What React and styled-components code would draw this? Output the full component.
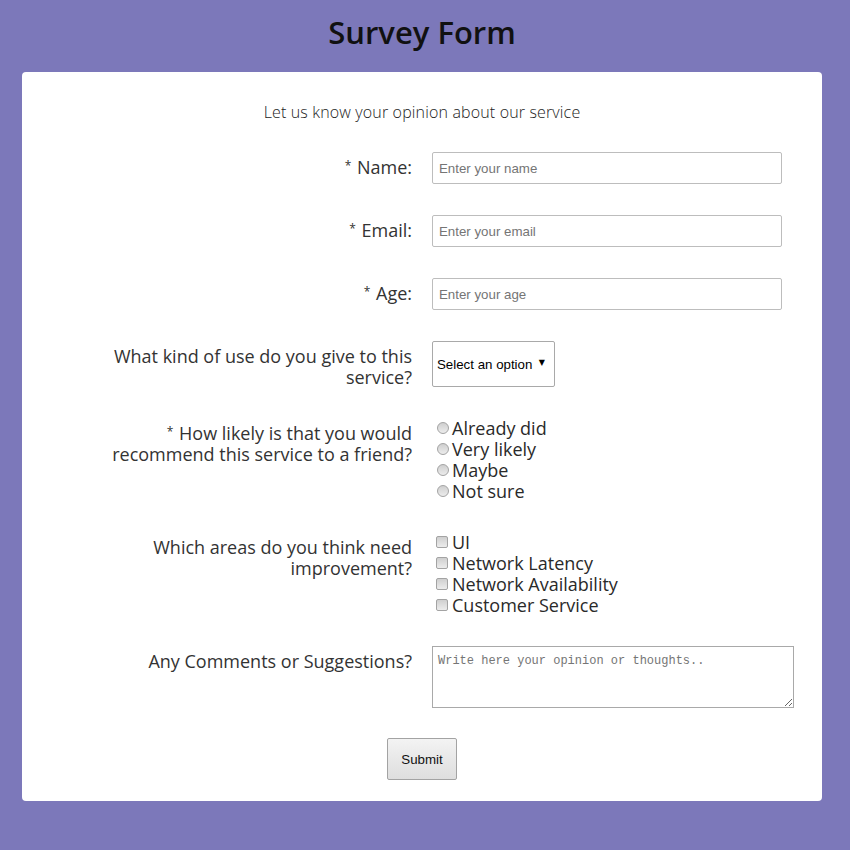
import React from "react";
import styled, { createGlobalStyle } from "styled-components";

const Global = createGlobalStyle`
  html, body { margin: 0; padding: 0; }
  body {
    background: #7c78ba;
    font-family: "Open Sans", "Lato", sans-serif;
    color: #2a2a2a;
  }
`;

const Page = styled.div`
  width: 850px;
  min-height: 850px;
  box-sizing: border-box;
  padding-left: 22px;
  display: flex;
  flex-direction: column;
`;

const Title = styled.h1`
  width: 800px;
  margin: 12px 0 0;
  height: 60px;
  font-family: "Open Sans", sans-serif;
  font-size: 31px;
  font-weight: 600;
  line-height: 40px;
  color: #111;
  text-align: center;
`;

const Card = styled.form`
  box-sizing: border-box;
  width: 800px;
  background: #fff;
  border-radius: 4px;
  padding: 30px 0 21px;
  display: flex;
  flex-direction: column;
`;

const Subtitle = styled.p`
  margin: 0 0 30px;
  font-size: 16px;
  line-height: 20px;
  font-weight: 300;
  letter-spacing: 0.15px;
  text-align: center;
  color: #222;
`;

const Row = styled.div`
  display: grid;
  grid-template-columns: 1fr 1fr;
  align-items: start;
  margin-bottom: ${(p) => p.$gap ?? 31}px;
`;

const Label = styled.label`
  box-sizing: border-box;
  justify-self: end;
  max-width: 310px;
  padding: 5px 10px 0 0;
  text-align: right;
  font-size: 18px;
  line-height: 21px;
  font-weight: 400;
  color: #333;
`;

const Star = styled.span`
  font-size: 12px;
  line-height: 0;
  vertical-align: 4px;
  margin-right: 1px;
`;

const Control = styled.div`
  box-sizing: border-box;
  padding-left: 10px;
  display: flex;
  flex-direction: column;
`;

const TextInput = styled.input`
  box-sizing: border-box;
  width: 350px;
  height: 32px;
  border: 1px solid #bdbdbd;
  border-radius: 2px;
  padding: 0 6px;
  font-family: "Liberation Sans", Arial, sans-serif;
  font-size: 13.3px;
  color: #222;
  outline: none;
  &::placeholder { color: #757575; }
`;

const SelectWrap = styled.div`
  position: relative;
  width: 123px;
  height: 46px;
`;

const Select = styled.select`
  appearance: none;
  box-sizing: border-box;
  width: 123px;
  height: 46px;
  border: 1px solid #a9a9a9;
  border-radius: 2px;
  background: #fff;
  padding: 0 0 0 4px;
  font-family: "Liberation Sans", Arial, sans-serif;
  font-size: 13.3px;
  color: #000;
  outline: none;
`;

const Arrow = styled.span`
  position: absolute;
  right: 10px;
  top: 16px;
  font-size: 8px;
  line-height: 12px;
  color: #000;
  pointer-events: none;
  font-family: "DejaVu Sans", sans-serif;
`;

const Option = styled.label`
  display: flex;
  align-items: center;
  height: 21px;
  font-size: 18px;
  line-height: 21px;
  font-weight: 400;
  color: #2a2a2a;
`;

const Radio = styled.input.attrs({ type: "radio" })`
  appearance: none;
  box-sizing: border-box;
  width: 12px;
  height: 12px;
  margin: 0 3px 2px 5px;
  border-radius: 50%;
  border: 1px solid #a3a3a3;
  background: linear-gradient(#cfcfcf, #ececec);
`;

const Check = styled.input.attrs({ type: "checkbox" })`
  appearance: none;
  box-sizing: border-box;
  width: 12px;
  height: 12px;
  margin: 0 4px 2px 4px;
  border-radius: 2px;
  border: 1px solid #a3a3a3;
  background: linear-gradient(#cfcfcf, #ececec);
`;

const TextArea = styled.textarea`
  box-sizing: border-box;
  width: 362px;
  height: 62px;
  border: 1px solid #a9a9a9;
  border-radius: 0;
  padding: 7px 5px;
  font-family: "Liberation Mono", "DejaVu Sans Mono", monospace;
  font-size: 12px;
  outline: none;
  &::placeholder { color: #757575; }
`;

const Submit = styled.button`
  align-self: center;
  width: 70px;
  height: 42px;
  border: 1px solid #a3a3a3;
  border-radius: 2px;
  background: linear-gradient(#f3f3f3, #dedede);
  font-family: "Liberation Sans", Arial, sans-serif;
  font-size: 13.3px;
  color: #111;
`;

const radios = ["Already did", "Very likely", "Maybe", "Not sure"];
const checks = ["UI", "Network Latency", "Network Availability", "Customer Service"];

export default function App() {
  return (
    <Page>
      <Global />
      <Title>Survey Form</Title>
      <Card onSubmit={(e) => e.preventDefault()}>
        <Subtitle>Let us know your opinion about our service</Subtitle>
        <Row>
          <Label htmlFor="name"><Star>*</Star> Name:</Label>
          <Control>
            <TextInput id="name" placeholder="Enter your name" />
          </Control>
        </Row>
        <Row>
          <Label htmlFor="email"><Star>*</Star> Email:</Label>
          <Control>
            <TextInput id="email" placeholder="Enter your email" />
          </Control>
        </Row>
        <Row>
          <Label htmlFor="age"><Star>*</Star> Age:</Label>
          <Control>
            <TextInput id="age" placeholder="Enter your age" />
          </Control>
        </Row>
        <Row $gap={30}>
          <Label>What kind of use do you give to this service?</Label>
          <Control>
            <SelectWrap>
              <Select defaultValue="">
                <option value="">Select an option</option>
                <option>Personal</option>
                <option>Business</option>
              </Select>
              <Arrow>▼</Arrow>
            </SelectWrap>
          </Control>
        </Row>
        <Row $gap={30}>
          <Label><Star>*</Star> How likely is that you would recommend this service to a friend?</Label>
          <Control>
            {radios.map((r) => (
              <Option key={r}>
                <Radio name="likely" />
                {r}
              </Option>
            ))}
          </Control>
        </Row>
        <Row $gap={30}>
          <Label>Which areas do you think need improvement?</Label>
          <Control>
            {checks.map((c) => (
              <Option key={c}>
                <Check />
                {c}
              </Option>
            ))}
          </Control>
        </Row>
        <Row $gap={30}>
          <Label>Any Comments or Suggestions?</Label>
          <Control>
            <TextArea placeholder="Write here your opinion or thoughts.." />
          </Control>
        </Row>
        <Submit type="submit">Submit</Submit>
      </Card>
    </Page>
  );
}
